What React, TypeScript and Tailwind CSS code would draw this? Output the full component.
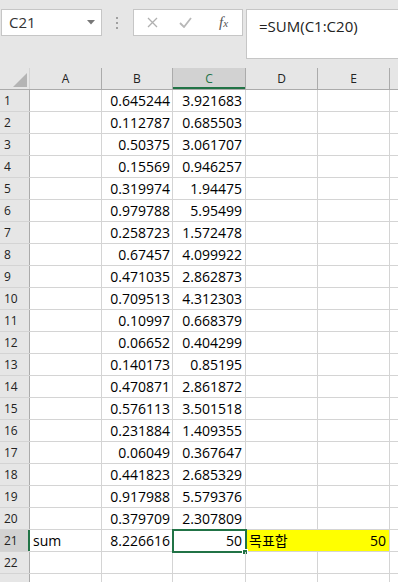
import React from "react";

const B = [
  "0.645244", "0.112787", "0.50375", "0.15569", "0.319974", "0.979788", "0.258723", "0.67457", "0.471035", "0.709513",
  "0.10997", "0.06652", "0.140173", "0.470871", "0.576113", "0.231884", "0.06049", "0.441823", "0.917988", "0.379709",
];
const C = [
  "3.921683", "0.685503", "3.061707", "0.946257", "1.94475", "5.95499", "1.572478", "4.099922", "2.862873", "4.312303",
  "0.668379", "0.404299", "0.85195", "2.861872", "3.501518", "1.409355", "0.367647", "2.685329", "5.579376", "2.307809",
];

const font = { fontFamily: '"Open Sans", "Noto Sans CJK KR", sans-serif' };

function FormulaBar() {
  return (
    <div className="relative h-[68px] bg-[#e6e6e6]">
      <div className="absolute left-[1px] top-[9px] flex h-[27px] w-[101px] items-center justify-between border border-[#c6c6c6] bg-white pl-[7px] pr-[6px]">
        <span className="text-[15px] text-[#333]">C21</span>
        <svg width="8" height="5" viewBox="0 0 8 5">
          <path d="M0 0h8L4 4.5z" fill="#777" />
        </svg>
      </div>
      <div className="absolute left-[116px] top-[17px] flex flex-col gap-[3px]">
        <span className="h-[2px] w-[2px] bg-[#a0a0a0]" />
        <span className="h-[2px] w-[2px] bg-[#a0a0a0]" />
        <span className="h-[2px] w-[2px] bg-[#a0a0a0]" />
      </div>
      <div className="absolute left-[133px] top-[9px] flex h-[27px] w-[110px] items-center border border-[#c6c6c6] bg-white">
        <svg className="ml-[13px]" width="11" height="11" viewBox="0 0 11 11">
          <path d="M1 1l9 9M10 1l-9 9" stroke="#b0b0b0" strokeWidth="1.3" />
        </svg>
        <svg className="ml-[21px]" width="13" height="11" viewBox="0 0 13 11">
          <path d="M1 6l4 4 7-9" stroke="#b8b8b8" strokeWidth="1.8" fill="none" />
        </svg>
        <span className="ml-[27px] text-[15px] italic text-[#555]" style={{ fontFamily: '"Liberation Serif", serif' }}>
          f<span className="text-[11px]">x</span>
        </span>
      </div>
      <div className="absolute left-[246px] top-[9px] h-[50px] w-[160px] border border-[#c6c6c6] bg-white pl-[12px] pt-[4px]">
        <span className="text-[15px] text-[#222]">=SUM(C1:C20)</span>
      </div>
    </div>
  );
}

const widths = ["w-[72px]", "w-[71px]", "w-[73px]", "w-[72px]", "w-[72px]"];

function HeaderRow() {
  const letters = ["A", "B", "C", "D", "E"];
  return (
    <div className="flex h-[22px] border-b border-[#ababab] bg-[#e6e6e6]">
      <div className="relative w-[30px] shrink-0 border-r border-[#d4d4d4]">
        <svg className="absolute left-[13px] top-[5px]" width="14" height="14" viewBox="0 0 14 14">
          <path d="M14 0V14H0z" fill="#b4b4b4" />
        </svg>
      </div>
      {letters.map((l, i) => (
        <div
          key={l}
          className={`${widths[i]} shrink-0 border-r flex items-center justify-center text-[12px] ${
            l === "C" ? "border-[#ababab] bg-[#d2d2d2] text-[#217346] shadow-[inset_0_-2px_0_#217346]" : "border-[#ababab] text-[#222]"
          }`}
        >
          {l}
        </div>
      ))}
      <div className="flex-1" />
    </div>
  );
}

function Row({ n }: { n: number }) {
  const sel = n === 21;
  const b = n <= 20 ? B[n - 1] : n === 21 ? "8.226616" : "";
  const c = n <= 20 ? C[n - 1] : n === 21 ? "50" : "";
  return (
    <div className="flex h-[22px] border-b border-[#d4d4d4] text-[14px] text-black">
      <div
        className={`w-[30px] shrink-0 flex items-center pl-[4px] text-[12px] ${
          sel ? "bg-[#d2d2d2] border-r-2 border-[#217346] text-[#222]" : "bg-[#e6e6e6] border-r border-[#ababab] text-[#222]"
        }`}
      >
        {n <= 22 ? n : ""}
      </div>
      <div className="w-[72px] shrink-0 border-r border-[#d4d4d4] flex items-center pl-[3px]">{sel ? "sum" : ""}</div>
      <div className="w-[71px] shrink-0 border-r border-[#d4d4d4] flex items-center justify-end pr-[2px]">{b}</div>
      <div className="relative w-[73px] shrink-0 border-r border-[#d4d4d4] flex items-center justify-end pr-[3px]">
        {c}
        {sel && (
          <>
            <div className="absolute -left-[1px] -top-[1px] h-[24px] w-[75px] border-2 border-[#217346]" />
            <div className="absolute -right-[3px] -bottom-[4px] h-[6px] w-[6px] border border-white bg-[#217346]" />
          </>
        )}
      </div>
      <div className={`w-[72px] shrink-0 border-r flex items-center pl-[3px] ${sel ? "bg-[#ffff00] border-[#ffff00]" : "border-[#d4d4d4]"}`}>
        {sel ? "목표합" : ""}
      </div>
      <div className={`w-[72px] shrink-0 border-r border-[#d4d4d4] flex items-center justify-end pr-[3px] ${sel ? "bg-[#ffff00]" : ""}`}>
        {sel ? "50" : ""}
      </div>
      <div className="flex-1" />
    </div>
  );
}

export default function App() {
  const rows = Array.from({ length: 23 }, (_, i) => i + 1);
  return (
    <div className="h-[582px] w-[398px] overflow-hidden bg-white" style={font}>
      <FormulaBar />
      <HeaderRow />
      {rows.map((n) => (
        <Row key={n} n={n} />
      ))}
    </div>
  );
}
